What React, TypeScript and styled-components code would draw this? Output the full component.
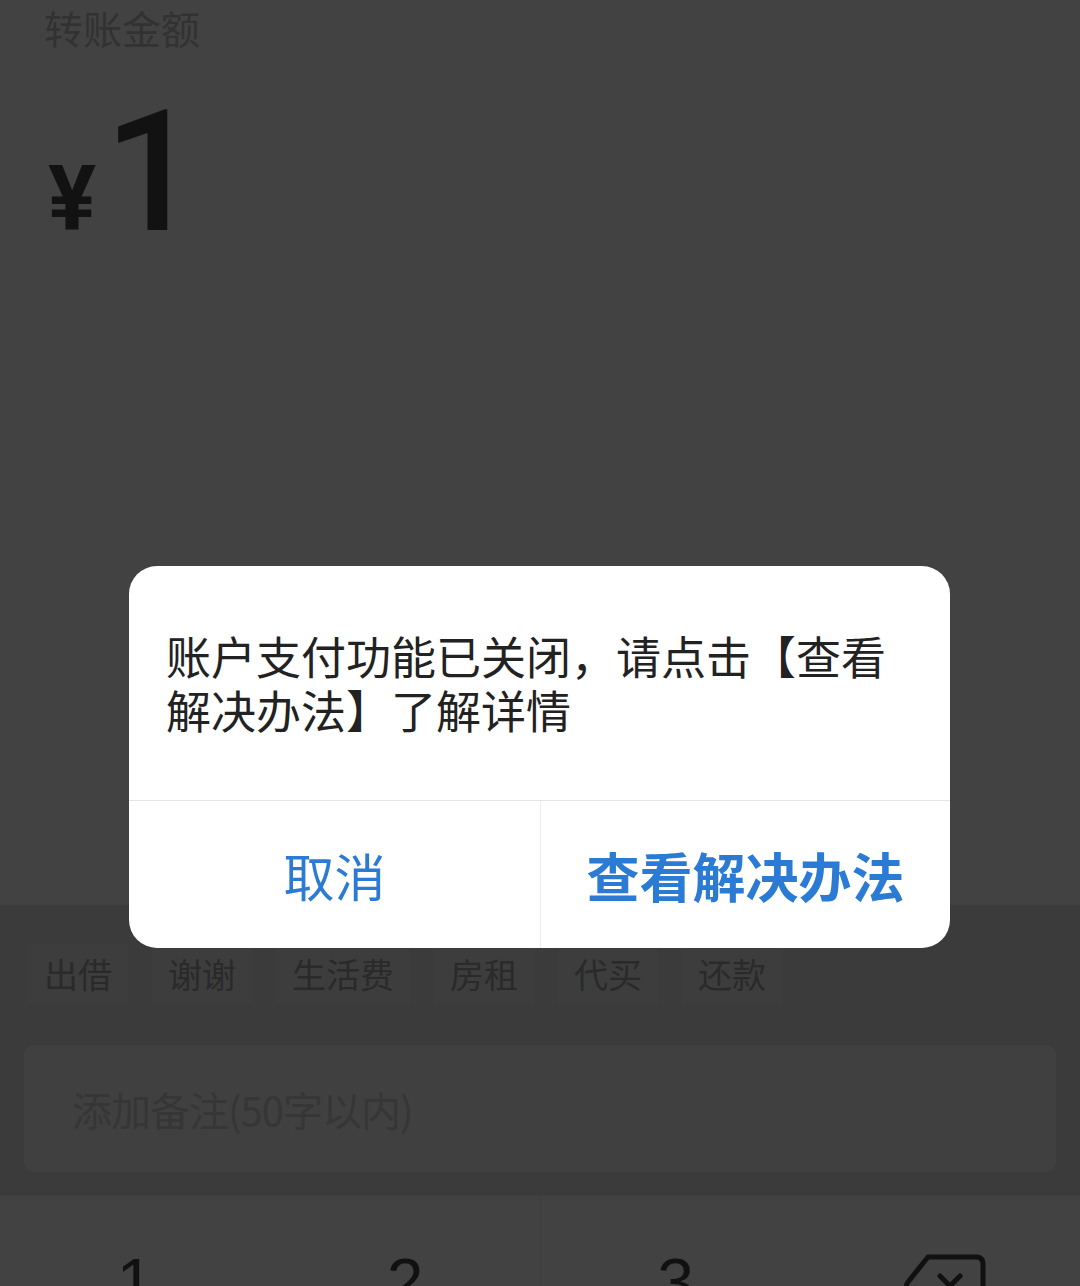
import React from "react";
import styled, { createGlobalStyle } from "styled-components";

const GlobalStyle = createGlobalStyle`
  html, body {
    margin: 0;
    padding: 0;
    background: #3b3b3b;
  }
  body {
    font-family: "Noto Sans CJK SC", "Noto Sans", sans-serif;
  }
`;

const TAGS = ["出借", "谢谢", "生活费", "房租", "代买", "还款"];
const KEYS = ["1", "2", "3"];

const App: React.FC = () => {
  return (
    <Page>
      <GlobalStyle />
      <AmountPanel>
        <Title>转账金额</Title>
        <AmountRow>
          <Currency>¥</Currency>
          <Amount>1</Amount>
        </AmountRow>
      </AmountPanel>
      <Lower>
        <TagRow>
          {TAGS.map((t) => (
            <Tag key={t}>{t}</Tag>
          ))}
        </TagRow>
        <Remark>
          <Placeholder>添加备注(50字以内)</Placeholder>
        </Remark>
        <Keyboard>
          {KEYS.map((k) => (
            <Key key={k}>{k}</Key>
          ))}
          <Key>
            <BackspaceIcon />
          </Key>
        </Keyboard>
      </Lower>
      <Dialog>
        <Message>账户支付功能已关闭，请点击【查看解决办法】了解详情</Message>
        <Actions>
          <ActionButton>取消</ActionButton>
          <ActionButton $primary>查看解决办法</ActionButton>
        </Actions>
      </Dialog>
    </Page>
  );
};

const BackspaceIcon: React.FC = () => (
  <svg width="82" height="64" viewBox="0 0 82 64" fill="none">
    <path
      d="M24 3 H72 Q79 3 79 10 V54 Q79 61 72 61 H24 L4 36 Q1 32 4 28 Z"
      stroke="#111"
      strokeWidth="5"
      strokeLinejoin="round"
    />
    <path d="M36 22 L56 42 M56 22 L36 42" stroke="#111" strokeWidth="5" strokeLinecap="round" />
  </svg>
);

const Page = styled.div`
  position: relative;
  width: 1080px;
  height: 1286px;
  overflow: hidden;
  background: #3b3b3b;
`;

const AmountPanel = styled.div`
  height: 905px;
  box-sizing: border-box;
  padding: 3px 44px 0;
  background: #424242;
`;

const Title = styled.div`
  font-size: 39px;
  line-height: 48px;
  color: #323232;
`;

const AmountRow = styled.div`
  display: flex;
  align-items: baseline;
  margin-top: 27px;
  height: 190px;
  padding-left: 4px;
`;

const Currency = styled.span`
  font-family: Roboto, "Liberation Sans", sans-serif;
  font-weight: 700;
  font-size: 90px;
  line-height: 190px;
  color: #121212;
  margin-right: 8px;
`;

const Amount = styled.span`
  font-family: Roboto, "Liberation Sans", sans-serif;
  font-weight: 500;
  font-size: 168px;
  line-height: 190px;
  color: #121212;
`;

const Lower = styled.div`
  display: flex;
  flex-direction: column;
`;

const TagRow = styled.div`
  display: flex;
  gap: 24px;
  padding: 40px 28px 0;
`;

const Tag = styled.div`
  height: 58px;
  padding: 0 16px;
  font-size: 34px;
  line-height: 58px;
  color: #2a2a2a;
  background: #3d3d3d;
`;

const Remark = styled.div`
  margin: 42px 24px 0;
  height: 127px;
  border-radius: 10px;
  background: #404040;
  display: flex;
  align-items: center;
  padding: 0 48px;
`;

const Placeholder = styled.span`
  font-size: 40px;
  color: #363636;
  letter-spacing: -1px;
`;

const Keyboard = styled.div`
  margin-top: 23px;
  display: grid;
  grid-template-columns: repeat(4, 1fr);
  background: #424242;
  border-top: 1px solid #3e3e3e;
  height: 200px;
`;

const Key = styled.div<{ $divider?: boolean }>`
  display: flex;
  justify-content: center;
  padding-top: 46px;
  font-family: "Liberation Sans", Arial, sans-serif;
  font-size: 66px;
  line-height: 80px;
  color: #111;
  &:nth-child(3) {
    border-left: 1px solid #3e3e3e;
  }
  svg {
    margin-top: 12px;
  }
`;

const Dialog = styled.div`
  position: absolute;
  top: 566px;
  left: 129px;
  width: 821px;
  height: 382px;
  border-radius: 28px;
  background: #fff;
  overflow: hidden;
  display: flex;
  flex-direction: column;
`;

const Message = styled.div`
  height: 235px;
  box-sizing: border-box;
  padding: 63px 37px 0;
  font-size: 45px;
  line-height: 54px;
  color: #222;
  border-bottom: 1px solid #e4e4e4;
`;

const Actions = styled.div`
  flex: 1;
  display: grid;
  grid-template-columns: 411px 1fr;
`;

const ActionButton = styled.div<{ $primary?: boolean }>`
  display: flex;
  align-items: center;
  justify-content: center;
  font-size: ${(p) => (p.$primary ? "53px" : "51px")};
  font-weight: ${(p) => (p.$primary ? 700 : 400)};
  color: #2b7bd5;
  & + & {
    border-left: 1px solid #ececec;
  }
`;

export default App;
